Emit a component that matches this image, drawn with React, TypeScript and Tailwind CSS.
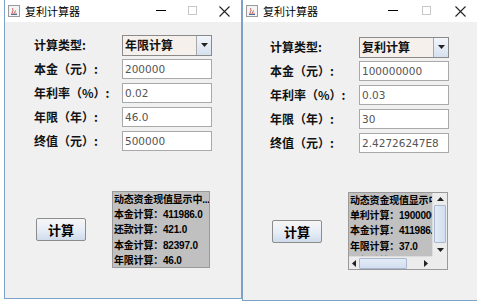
import React from "react";

const cjk = { fontFamily: '"Noto Sans CJK SC", "Noto Sans", sans-serif' };
const lat = { fontFamily: '"DejaVu Sans", "Noto Sans CJK SC", sans-serif' };
const mix = { fontFamily: '"Liberation Sans", "Noto Sans CJK SC", sans-serif' };

function JavaIcon() {
  return (
    <svg width="12" height="12" viewBox="0 0 12 12">
      <rect x="0.5" y="0.5" width="11" height="11" fill="#f4f4f4" stroke="#9a9a9a" />
      <path d="M3 9h6M4 8c0-1 1-1.5 1-2.5S4 4 5 3M6.5 8c0-1 1-1.5 1-2.5" stroke="#c0504d" strokeWidth="1" fill="none" />
      <path d="M3 9.5h6" stroke="#4a6fa5" strokeWidth="1" />
    </svg>
  );
}

function TitleBar({ minX, maxX, closeX }: { minX: string; maxX: string; closeX: string }) {
  return (
    <div className="h-[22px] bg-white flex items-center relative shrink-0">
      <div className="ml-[3px] flex"><JavaIcon /></div>
      <span className="ml-[5px] text-[11px] leading-none text-black" style={cjk}>复利计算器</span>
      <div className={`absolute top-[10px] h-px w-[10px] bg-black ${minX}`} />
      <div className={`absolute top-[6px] h-[9px] w-[9px] border border-[#c8c8c8] ${maxX}`} />
      <svg className={`absolute top-[6px] ${closeX}`} width="11" height="11" viewBox="0 0 11 11">
        <path d="M0.5 0.5L10.5 10.5M10.5 0.5L0.5 10.5" stroke="#222" strokeWidth="1.1" />
      </svg>
    </div>
  );
}

function Field({ value }: { value: string }) {
  return (
    <div className="h-[20px] w-[90px] bg-white border border-[#a9a9a9] flex items-center px-[2px]">
      <span className="text-[10.5px] leading-none text-[#555]" style={lat}>{value}</span>
    </div>
  );
}

function Combo({ value }: { value: string }) {
  return (
    <div className="h-[21px] w-[90px] border border-[#8a8a8a] flex bg-[#f6f0ec]">
      <div className="flex-1 flex items-center pl-[2px]">
        <span className="text-[12px] leading-none font-bold text-[#111]" style={cjk}>{value}</span>
      </div>
      <div className="w-[15px] border-l border-[#a8a8a8] bg-gradient-to-b from-[#f2f6fb] to-[#d5e1ef] flex items-center justify-center">
        <svg width="7" height="4" viewBox="0 0 7 4"><path d="M0 0h7L3.5 4z" fill="#222" /></svg>
      </div>
    </div>
  );
}

function Row({ label, children, labelW }: { label: string; children: React.ReactNode; labelW: string }) {
  return (
    <div className="flex items-center h-[20px]">
      <div className={`${labelW} flex items-center`}>
        <span className="text-[12px] font-bold text-[#111] leading-none" style={cjk}>{label}</span>
      </div>
      {children}
    </div>
  );
}

function CalcButton() {
  return (
    <div className="w-[50px] h-[23px] border border-[#8c8c8c] rounded-[2px] bg-gradient-to-b from-[#f6f6f6] via-[#e8eef6] to-[#cfdcec] flex items-center justify-center">
      <span className="text-[13px] leading-none font-bold text-black" style={cjk}>计算</span>
    </div>
  );
}

function Line({ children }: { children: React.ReactNode }) {
  return (
    <div className="h-[15.4px] flex items-center whitespace-nowrap text-[10px] leading-none font-bold text-black tracking-[-0.2px]" style={mix}>
      {children}
    </div>
  );
}

function LeftWindow() {
  return (
    <div className="w-[238px] h-[299px] ml-[4px] border-l border-r border-b border-[#7da2c8] flex flex-col bg-[#f0f0f0]">
      <TitleBar minX="left-[151px]" maxX="left-[183px]" closeX="left-[214px]" />
      <div className="flex flex-col gap-[4px] pt-[13px]">
        <Row label="计算类型:" labelW="w-[88px] pl-[29px] box-content">
          <Combo value="年限计算" />
        </Row>
        <Row label="本金（元）:" labelW="w-[88px] pl-[29px] box-content"><Field value="200000" /></Row>
        <Row label="年利率（%）:" labelW="w-[88px] pl-[29px] box-content"><Field value="0.02" /></Row>
        <Row label="年限（年）:" labelW="w-[88px] pl-[29px] box-content"><Field value="46.0" /></Row>
        <Row label="终值（元）:" labelW="w-[88px] pl-[29px] box-content"><Field value="500000" /></Row>
      </div>
      <div className="flex items-center mt-[40px] pl-[31px]">
        <CalcButton />
        <div className="ml-[26px] w-[98px] h-[77px] bg-[#c0c0c0] border border-[#9a9a9a] pl-[1px] overflow-hidden">
          <Line>动态资金现值显示中...</Line>
          <Line>本金计算：411986.0</Line>
          <Line>还款计算：421.0</Line>
          <Line>本金计算：82397.0</Line>
          <Line>年限计算：46.0</Line>
        </div>
      </div>
    </div>
  );
}

function ScrollArrow({ dir }: { dir: "up" | "down" | "left" | "right" }) {
  const paths: Record<string, string> = {
    up: "M0 4h7L3.5 0z",
    down: "M0 0h7L3.5 4z",
    left: "M4 0v7L0 3.5z",
    right: "M0 0v7L4 3.5z",
  };
  const vert = dir === "up" || dir === "down";
  return (
    <svg width={vert ? 7 : 4} height={vert ? 4 : 7} viewBox={vert ? "0 0 7 4" : "0 0 4 7"}>
      <path d={paths[dir]} fill="#222" />
    </svg>
  );
}

function RightWindow() {
  return (
    <div className="w-[235px] h-[301px] border-l border-b border-[#7da2c8] flex flex-col bg-[#f0f0f0]">
      <TitleBar minX="left-[145px]" maxX="left-[179px]" closeX="left-[212px]" />
      <div className="flex flex-col gap-[4px] pt-[15px]">
        <Row label="计算类型:" labelW="w-[89px] pl-[27px] box-content"><Combo value="复利计算" /></Row>
        <Row label="本金（元）:" labelW="w-[89px] pl-[27px] box-content"><Field value="100000000" /></Row>
        <Row label="年利率（%）:" labelW="w-[89px] pl-[27px] box-content"><Field value="0.03" /></Row>
        <Row label="年限（年）:" labelW="w-[89px] pl-[27px] box-content"><Field value="30" /></Row>
        <Row label="终值（元）:" labelW="w-[89px] pl-[27px] box-content"><Field value="2.42726247E8" /></Row>
      </div>
      <div className="flex items-center mt-[39px] pl-[29px]">
        <CalcButton />
        <div className="ml-[26px] w-[100px] h-[78px] border border-[#9a9a9a] grid grid-cols-[1fr_15px] grid-rows-[1fr_13px] bg-[#f0f0f0]">
          <div className="bg-[#c0c0c0] overflow-hidden pl-[1px]">
            <Line>动态资金现值显示中...</Line>
            <Line>单利计算：1900000.0</Line>
            <Line>本金计算：411986.7</Line>
            <Line>年限计算：37.0</Line>
            <Line>还款计算：421.0</Line>
          </div>
          <div className="flex flex-col items-center bg-[#ececec] border-l border-[#dcdcdc]">
            <div className="h-[12px] flex items-center"><ScrollArrow dir="up" /></div>
            <div className="w-[12px] h-[38px] bg-gradient-to-r from-[#e3ebf6] to-[#d2def0] border border-[#a8b8d0] rounded-[1px]" />
            <div className="flex-1" />
            <div className="h-[12px] flex items-center"><ScrollArrow dir="down" /></div>
          </div>
          <div className="flex items-center bg-[#ececec] border-t border-[#dcdcdc]">
            <div className="w-[10px] flex justify-center"><ScrollArrow dir="left" /></div>
            <div className="w-[48px] h-[11px] bg-gradient-to-b from-[#e3ebf6] to-[#d2def0] border border-[#a8b8d0] rounded-[1px]" />
            <div className="flex-1" />
            <div className="w-[12px] flex justify-center"><ScrollArrow dir="right" /></div>
          </div>
          <div className="bg-[#ececec]" />
        </div>
      </div>
    </div>
  );
}

export default function App() {
  return (
    <div className="w-[494px] h-[306px] bg-white flex items-start overflow-hidden">
      <LeftWindow />
      <RightWindow />
    </div>
  );
}
